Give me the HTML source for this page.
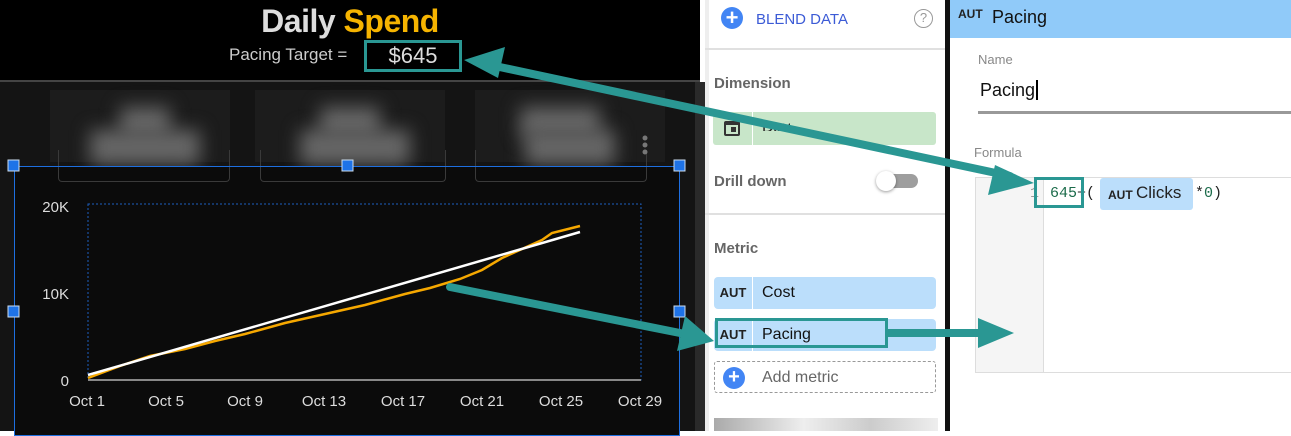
<!DOCTYPE html>
<html><head><style>
*{margin:0;padding:0;box-sizing:border-box}
body{width:1291px;height:431px;position:relative;overflow:hidden;font-family:"Liberation Sans",sans-serif;background:#fff}
.a{position:absolute}
.chip{position:absolute;left:714px;width:222px;height:32px;border-radius:4px;background:#bbdefb}
.chip .t{position:absolute;left:0;top:0;width:39px;height:32px;border-right:1px solid #fff;font:bold 13px "Liberation Sans",sans-serif;color:#222;text-align:center;line-height:32px}
.chip .n{position:absolute;left:48px;top:0;line-height:32px;font-size:16px;color:#111}
.lbl{position:absolute;left:714px;font-weight:bold;font-size:15px;color:#666}
.card{position:absolute;top:90px;height:72px;background:#1c1c1c}
.blob{position:absolute;background:#666;filter:blur(9px)}
.cb{position:absolute;top:150px;height:32px;border:1.5px solid #3a3a3a;border-top:none;border-radius:0 0 4px 4px}
</style></head><body>
<div class="a" style="left:0;top:0;width:700px;height:80px;background:#000"></div>
<div class="a" style="left:0;top:80px;width:700px;height:2px;background:#444"></div>
<div class="a" style="left:0;top:82px;width:695px;height:349px;background:#141414"></div>
<div class="a" style="left:0;top:3px;width:700px;text-align:center;font-weight:bold;font-size:32px;color:#ddd;letter-spacing:-0.5px">Daily <span style="color:#f6b400">Spend</span></div>
<div class="a" style="left:229px;top:45px;font-size:17px;color:#ccc">Pacing Target =</div>
<div class="a" style="left:364px;top:40px;width:98px;height:32px;border:3px solid #2a9793;color:#ddd;font-size:22px;text-align:center;line-height:26px">$645</div>
<div class="card" style="left:50px;width:180px"></div>
<div class="card" style="left:255px;width:190px"></div>
<div class="card" style="left:475px;width:190px"></div>
<div class="blob" style="left:120px;top:107px;width:50px;height:30px"></div>
<div class="blob" style="left:90px;top:130px;width:110px;height:35px"></div>
<div class="blob" style="left:320px;top:107px;width:60px;height:30px"></div>
<div class="blob" style="left:300px;top:130px;width:110px;height:35px"></div>
<div class="blob" style="left:520px;top:107px;width:80px;height:30px"></div>
<div class="blob" style="left:525px;top:130px;width:90px;height:35px"></div>
<div class="a" style="left:14px;top:166px;width:666px;height:270px;background:#0b0b0b"></div>
<div class="cb" style="left:58px;width:172px"></div>
<div class="cb" style="left:260px;width:186px"></div>
<div class="cb" style="left:475px;width:172px"></div>
<div class="a" style="left:14px;top:166px;width:666px;height:270px;border:1.5px solid #1e6fe0"></div>
<div class="a" style="left:695px;top:82px;width:10px;height:349px;background:#2a2a2a"></div>
<svg class="a" style="left:0;top:0" width="700" height="431">
<g fill="#1e73e8" stroke="#cde" stroke-width="1">
<rect x="8" y="160" width="11" height="11"/><rect x="342" y="160" width="11" height="11"/><rect x="674" y="160" width="11" height="11"/>
<rect x="8" y="306" width="11" height="11"/><rect x="674" y="306" width="11" height="11"/></g>
<g fill="#777"><circle cx="645" cy="138" r="2.5"/><circle cx="645" cy="145" r="2.5"/><circle cx="645" cy="152" r="2.5"/></g>
<rect x="88" y="204" width="553" height="176" fill="none" stroke="#1d5fbf" stroke-dasharray="2,2"/>
<line x1="88" y1="380" x2="641" y2="380" stroke="#888" stroke-width="2"/>
<g font-family="Liberation Sans" font-size="15" fill="#ddd" text-anchor="end">
<text x="69" y="212">20K</text><text x="69" y="299">10K</text><text x="69" y="386">0</text></g>
<g font-family="Liberation Sans" font-size="15" fill="#ddd" text-anchor="middle">
<text x="87" y="406">Oct 1</text><text x="166" y="406">Oct 5</text><text x="245" y="406">Oct 9</text><text x="324" y="406">Oct 13</text><text x="403" y="406">Oct 17</text><text x="482" y="406">Oct 21</text><text x="561" y="406">Oct 25</text><text x="640" y="406">Oct 29</text></g>
<polyline points="88,378 120,366 150,356 185,349 215,341 245,334 285,323 325,314 365,305 405,294 430,288 460,279 482,270 502,258 522,249 542,240 552,233 580,226" fill="none" stroke="#f6a800" stroke-width="2.5"/>
<line x1="88" y1="375" x2="580" y2="232" stroke="#fff" stroke-width="2.5"/>
</svg>
<div class="a" style="left:705px;top:0;width:240px;height:431px;background:#fff"></div>
<div class="a" style="left:705px;top:0;width:4px;height:431px;background:#eee"></div>
<div class="a" style="left:721px;top:7px;width:22px;height:22px;border-radius:50%;background:#4285f4;color:#fff;font-size:22px;line-height:21px;text-align:center;font-weight:bold">+</div>
<div class="a" style="left:756px;top:11px;font-size:15px;color:#3c5bd6">BLEND DATA</div>
<div class="a" style="left:914px;top:9px;width:19px;height:19px;border:1.5px solid #999;border-radius:50%;color:#999;font-size:13px;text-align:center;line-height:16px">?</div>
<div class="a" style="left:705px;top:48px;width:240px;height:2px;background:#e0e0e0"></div>
<div class="lbl" style="top:75px">Dimension</div>
<div class="a" style="left:713px;top:112px;width:223px;height:33px;border-radius:3px;background:#c8e6c9"></div>
<div class="a" style="left:752px;top:112px;width:1px;height:33px;background:#fff"></div>
<div class="a" style="left:724px;top:121px;width:16px;height:15px;border:2.5px solid #333;border-top-width:4px;border-radius:2px"></div>
<div class="a" style="left:731px;top:127px;width:5px;height:5px;background:#333"></div>
<div class="a" style="left:762px;top:119px;font-size:16px;color:#222;height:12px;overflow:hidden">Day</div>
<div class="lbl" style="top:173px">Drill down</div>
<div class="a" style="left:884px;top:174px;width:34px;height:14px;border-radius:7px;background:#9e9e9e"></div>
<div class="a" style="left:876px;top:171px;width:20px;height:20px;border-radius:50%;background:#fff;box-shadow:0 1px 3px rgba(0,0,0,.4)"></div>
<div class="a" style="left:705px;top:213px;width:240px;height:2px;background:#e0e0e0"></div>
<div class="lbl" style="top:240px">Metric</div>
<div class="chip" style="top:277px"><div class="t">AUT</div><div class="n">Cost</div></div>
<div class="chip" style="top:319px"><div class="t">AUT</div><div class="n">Pacing</div></div>
<div class="a" style="left:715px;top:318px;width:173px;height:30px;border:3px solid #2a9793"></div>
<div class="a" style="left:714px;top:361px;width:222px;height:32px;border:1px dashed #999;border-radius:3px"></div>
<div class="a" style="left:723px;top:367px;width:22px;height:22px;border-radius:50%;background:#4285f4;color:#fff;font-size:20px;line-height:21px;text-align:center;font-weight:bold">+</div>
<div class="a" style="left:762px;top:369px;font-size:16px;color:#666">Add metric</div>
<div class="a" style="left:714px;top:418px;width:224px;height:13px;background:linear-gradient(90deg,#aaa,#eee 40%,#ccc 70%,#eee)"></div>
<div class="a" style="left:945px;top:0;width:5px;height:431px;background:#111"></div>
<div class="a" style="left:950px;top:0;width:341px;height:38px;background:#90caf9"></div>
<div class="a" style="left:958px;top:7px;font-weight:bold;font-size:12px;color:#222">AUT</div>
<div class="a" style="left:992px;top:7px;font-size:18px;color:#111">Pacing</div>
<div class="a" style="left:978px;top:52px;font-size:13px;color:#888">Name</div>
<div class="a" style="left:980px;top:80px;font-size:18px;color:#111">Pacing<span style="border-left:2px solid #000;margin-left:1px"></span></div>
<div class="a" style="left:978px;top:111px;width:313px;height:3px;background:#999"></div>
<div class="a" style="left:974px;top:145px;font-size:13px;color:#888">Formula</div>
<div class="a" style="left:975px;top:177px;width:320px;height:196px;border:1px solid #ddd;background:#fff"></div>
<div class="a" style="left:976px;top:178px;width:68px;height:194px;background:#f5f5f5;border-right:1px solid #ddd"></div>
<div class="a" style="left:1030px;top:185px;font:15px 'Liberation Mono',monospace;color:#999">1</div>
<div class="a" style="left:1050px;top:185px;font:15px 'Liberation Mono',monospace;color:#1b6b4a">645<span style="color:#222">+(</span></div>
<div class="a" style="left:1100px;top:178px;width:93px;height:32px;background:#bbdefb;border-radius:3px"></div>
<div class="a" style="left:1108px;top:188px;font-weight:bold;font-size:12px;color:#222">AUT</div>
<div class="a" style="left:1136px;top:183px;font-size:17px;color:#222">Clicks</div>
<div class="a" style="left:1195px;top:185px;font:15px 'Liberation Mono',monospace;color:#222">*<span style="color:#1b6b4a">0</span>)</div>
<div class="a" style="left:1034px;top:177px;width:50px;height:31px;border:3px solid #2a9793"></div>
<svg class="a" style="left:0;top:0" width="1291" height="431">
<g stroke="#2a9793" stroke-width="8" fill="#2a9793" stroke-linecap="round">
<line x1="495" y1="66" x2="1010" y2="176"/>
<polygon points="464,60 505,47 498,78" stroke="none"/>
<polygon points="1034,183 995,165 988,195" stroke="none"/>
<line x1="450" y1="287" x2="690" y2="335"/>
<polygon points="714,341 685,316 677,351" stroke="none"/>
<line x1="888" y1="333" x2="980" y2="333" stroke-linecap="butt"/>
<polygon points="1014,333 978,318 978,348" stroke="none"/>
</g></svg>
</body></html>
